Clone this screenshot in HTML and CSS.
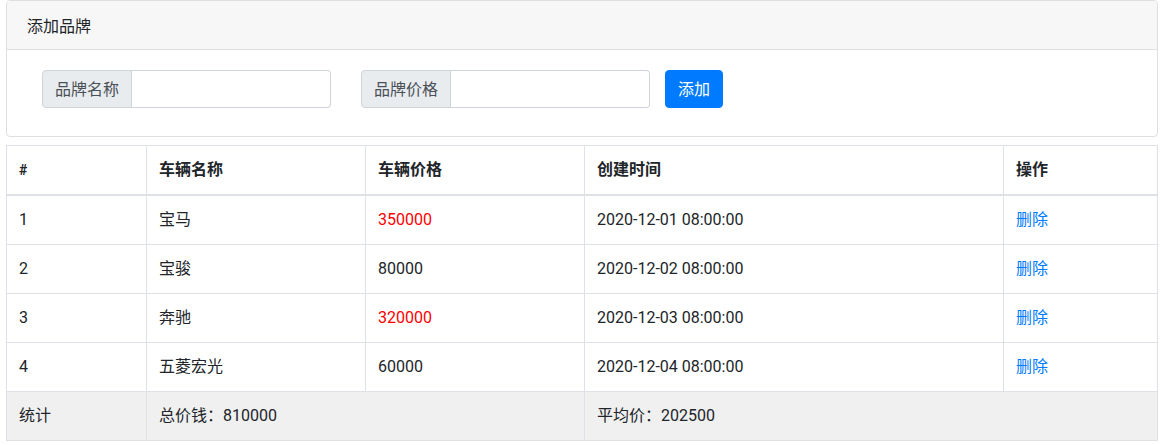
FILE: index.html
```html
<!DOCTYPE html>
<html lang="zh-CN">
<head>
<meta charset="utf-8">
<title>品牌管理</title>
<link rel="stylesheet" href="styles.css">
</head>
<body>
<div class="wrap">
  <div class="card">
    <div class="card-header">添加品牌</div>
    <div class="card-body">
      <div class="input-group">
        <span class="addon">品牌名称</span>
        <input class="field" type="text">
      </div>
      <div class="input-group">
        <span class="addon">品牌价格</span>
        <input class="field" type="text">
      </div>
      <button class="btn" type="button">添加</button>
    </div>
  </div>

  <table class="table">
    <colgroup>
      <col class="c1"><col class="c2"><col class="c3"><col class="c4"><col class="c5">
    </colgroup>
    <thead>
      <tr><th>#</th><th>车辆名称</th><th>车辆价格</th><th>创建时间</th><th>操作</th></tr>
    </thead>
    <tbody>
      <tr><td>1</td><td>宝马</td><td class="red">350000</td><td>2020-12-01 08:00:00</td><td><a class="link" href="#">删除</a></td></tr>
      <tr><td>2</td><td>宝骏</td><td>80000</td><td>2020-12-02 08:00:00</td><td><a class="link" href="#">删除</a></td></tr>
      <tr><td>3</td><td>奔驰</td><td class="red">320000</td><td>2020-12-03 08:00:00</td><td><a class="link" href="#">删除</a></td></tr>
      <tr><td>4</td><td>五菱宏光</td><td>60000</td><td>2020-12-04 08:00:00</td><td><a class="link" href="#">删除</a></td></tr>
      <tr class="foot"><td>统计</td><td colspan="2">总价钱：810000</td><td colspan="2">平均价：202500</td></tr>
    </tbody>
  </table>
</div>
</body>
</html>
```
FILE: styles.css
```css
* { box-sizing: border-box; }
html, body { margin: 0; padding: 0; background: #fff; }
body {
  font-family: Roboto, "Noto Sans CJK SC", sans-serif;
  font-size: 16px;
  line-height: 24px;
  color: #212529;
}
.wrap { padding: 0 9px 0 6px; }

.card {
  border: 1px solid #dfdfdf;
  border-radius: 4px;
  background: #fff;
}
.card-header {
  height: 49px;
  padding: 14px 20px 10px;
  background: #f7f7f7;
  border-bottom: 1px solid #dfdfdf;
  border-radius: 3px 3px 0 0;
}
.card-body {
  display: flex;
  align-items: center;
  padding: 20px 0 28px 35px;
}
.input-group {
  display: flex;
  width: 289px;
  height: 38px;
  margin-right: 30px;
}
.input-group:nth-of-type(2) { margin-right: 15px; }
.addon {
  display: flex;
  align-items: center;
  padding: 1px 12px 0;
  color: #495057;
  background: #e9ecef;
  border: 1px solid #ced4da;
  border-radius: 4px 0 0 4px;
  white-space: nowrap;
}
.field {
  flex: 1;
  min-width: 0;
  height: 38px;
  border: 1px solid #ced4da;
  border-left: none;
  border-radius: 0 4px 4px 0;
  font: inherit;
  padding: 6px 12px;
  outline: none;
}
.btn {
  height: 38px;
  padding: 1px 12px 0;
  border: 1px solid #007bff;
  border-radius: 4px;
  background: #007bff;
  color: #fff;
  font: inherit;
}

.table {
  margin-top: 8px;
  width: 100%;
  border-collapse: collapse;
  table-layout: fixed;
}
.c1 { width: 140px; }
.c2 { width: 219px; }
.c3 { width: 219px; }
.c4 { width: 419px; }
.c5 { width: auto; }
.table th, .table td {
  border: 1px solid #dee2e6;
  padding: 12px;
  text-align: left;
  vertical-align: top;
  height: 49px;
}
.table th { font-weight: bold; }
.table thead th {
  border-bottom: 2px solid #dee2e6;
  height: 49px;
}
.table th:first-child { font-size: 14px; }
.red { color: #ff0000; }
.link { color: #007bff; text-decoration: none; }
.foot td { background: #f0f0f0; }
```
